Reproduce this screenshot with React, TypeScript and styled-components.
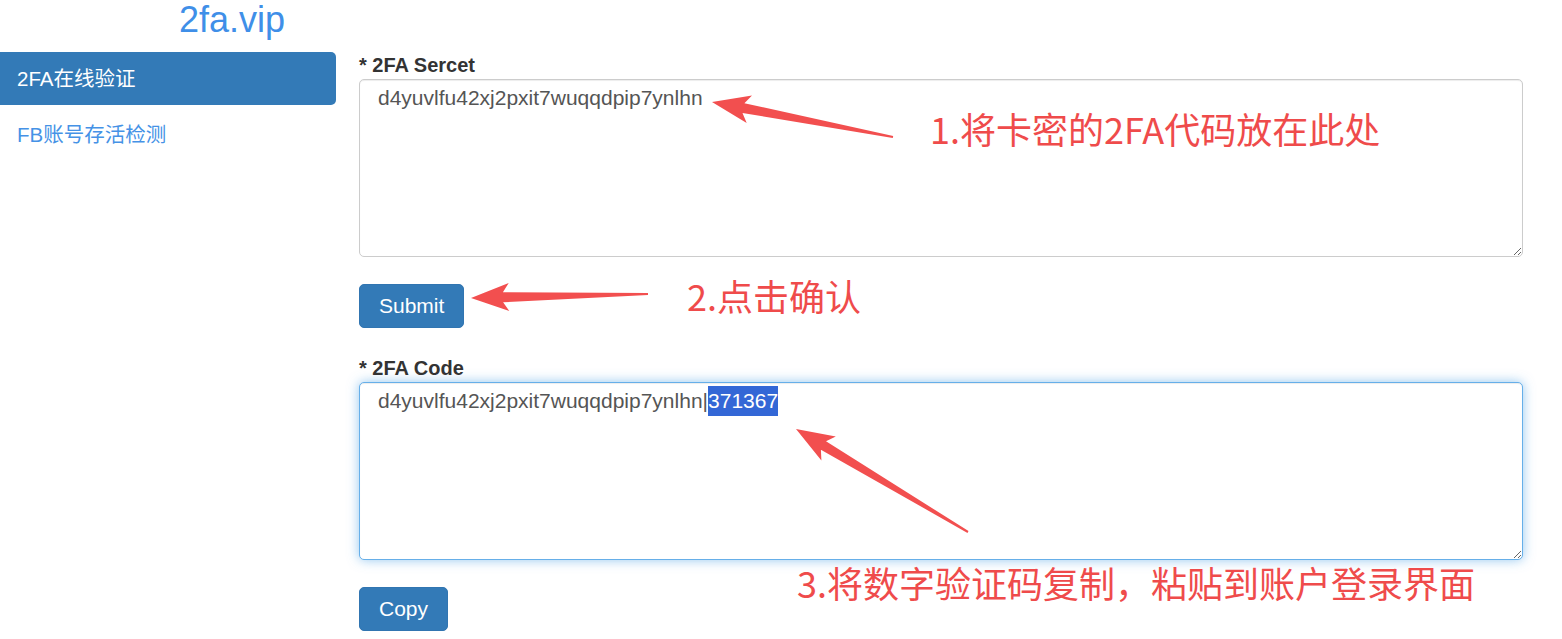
import React, { useEffect, useRef } from 'react';
import styled, { createGlobalStyle } from 'styled-components';

const GlobalStyle = createGlobalStyle`
  html, body {
    margin: 0;
    padding: 0;
    background: #fff;
  }
  body {
    font-family: "Liberation Sans", Arial, "Noto Sans CJK SC", sans-serif;
    color: #333;
  }
`

const Page = styled.div`
  position: relative;
  display: flex;
  width: 1562px;
  min-height: 639px;
  overflow: hidden;
`

const Sidebar = styled.aside`
  width: 336px;
  flex-shrink: 0;
`

const Brand = styled.div`
  padding-left: 179px;
  font-size: 36px;
  line-height: 40px;
  color: #3f8fe8;
`

const Nav = styled.ul`
  list-style: none;
  margin: 12px 0 0;
  padding: 0;
  display: flex;
  flex-direction: column;
  gap: 3px;
`

const NavItem = styled.li<{ $active?: boolean }>`
  padding: 15px 17px;
  font-size: 20.5px;
  line-height: 23px;
  border-radius: 0 5px 5px 0;
  background: ${p => (p.$active ? '#337ab7' : 'transparent')};
  color: ${p => (p.$active ? '#fff' : '#4592e6')};
  cursor: pointer;
`

const Main = styled.main`
  flex: 1;
  padding: 53px 39px 0 23px;
`

const Label = styled.label<{ $top?: number }>`
  display: block;
  margin-top: ${p => p.$top || 0}px;
  margin-bottom: 2px;
  font-size: 20px;
  line-height: 24px;
  font-weight: bold;
  color: #333;
`

const TextBox = styled.textarea`
  display: block;
  box-sizing: border-box;
  width: 100%;
  height: 178px;
  margin: 0;
  padding: 3px 18px;
  font-family: "Liberation Sans", Arial, sans-serif;
  font-size: 21px;
  line-height: 30px;
  color: #555;
  background: #fff;
  border: 1px solid #ccc;
  border-radius: 5px;
  box-shadow: inset 0 1px 1px rgba(0, 0, 0, 0.075);
  outline: none;
  resize: vertical;

  &:focus {
    border-color: #66afe9;
    box-shadow: inset 0 1px 1px rgba(0, 0, 0, 0.075), 0 0 12px rgba(102, 175, 233, 0.7);
  }

  &::selection {
    background: #3367d6;
    color: #fff;
  }
`

const Button = styled.button`
  display: block;
  margin-top: 27px;
  height: 44px;
  padding: 0 19px;
  font-family: "Liberation Sans", Arial, sans-serif;
  font-size: 21px;
  color: #fff;
  background: #337ab7;
  border: 1px solid #3175b1;
  border-radius: 5px;
  cursor: pointer;
`

const Note = styled.div<{ $x: number; $y: number }>`
  position: absolute;
  left: ${p => p.$x}px;
  top: ${p => p.$y}px;
  font-family: "Noto Sans CJK SC", "Liberation Sans", sans-serif;
  font-size: 36px;
  line-height: 36px;
  color: #ef4b4b;
  white-space: nowrap;
`

const Overlay = styled.svg`
  position: absolute;
  left: 0;
  top: 0;
  pointer-events: none;
`

type Pt = [number, number];

// tapered "powerpoint" style arrow from tail to tip
const arrowPoints = (tip: Pt, tail: Pt, head = 38, half = 14): string => {
  const dx = tip[0] - tail[0];
  const dy = tip[1] - tail[1];
  const len = Math.hypot(dx, dy);
  const ux = dx / len, uy = dy / len;
  const nx = -uy, ny = ux;
  const bx = tip[0] - ux * head, by = tip[1] - uy * head;
  const nb = tip[0] - ux * (head - 6), nby = tip[1] - uy * (head - 6);
  const pts: Pt[] = [
    tip,
    [bx + nx * half, by + ny * half],
    [nb + nx * 5, nby + ny * 5],
    [tail[0] + nx * 1, tail[1] + ny * 1],
    [tail[0] - nx * 1, tail[1] - ny * 1],
    [nb - nx * 5, nby - ny * 5],
    [bx - nx * half, by - ny * half],
  ];
  return pts.map(p => `${p[0].toFixed(1)},${p[1].toFixed(1)}`).join(' ');
}

const arrows: { tip: Pt; tail: Pt }[] = [
  { tip: [712, 102], tail: [893, 137] },
  { tip: [471, 298], tail: [648, 294] },
  { tip: [796, 429], tail: [968, 532] },
];

const secret = 'd4yuvlfu42xj2pxit7wuqqdpip7ynlhn';
const code = '371367';

function App() {
  const codeRef = useRef<HTMLTextAreaElement>(null);

  useEffect(() => {
    const el = codeRef.current;
    if (el) {
      el.focus();
      el.setSelectionRange(secret.length + 1, secret.length + 1 + code.length);
    }
  }, []);

  return (
    <Page>
      <GlobalStyle />
      <Sidebar>
        <Brand>2fa.vip</Brand>
        <Nav>
          <NavItem $active>2FA在线验证</NavItem>
          <NavItem>FB账号存活检测</NavItem>
        </Nav>
      </Sidebar>

      <Main>
        <Label>* 2FA Sercet</Label>
        <TextBox defaultValue={secret} />
        <Button>Submit</Button>

        <Label $top={28}>* 2FA Code</Label>
        <TextBox ref={codeRef} defaultValue={`${secret}|${code}`} />
        <Button>Copy</Button>
      </Main>

      <Overlay width={1562} height={639}>
        {arrows.map((a, i) => (
          <polygon key={i} points={arrowPoints(a.tip, a.tail)} fill="#f24f4f" />
        ))}
      </Overlay>

      <Note $x={930} $y={110}>1.将卡密的2FA代码放在此处</Note>
      <Note $x={687} $y={277}>2.点击确认</Note>
      <Note $x={797} $y={564}>3.将数字验证码复制，粘贴到账户登录界面</Note>
    </Page>
  );
}

export default App;
